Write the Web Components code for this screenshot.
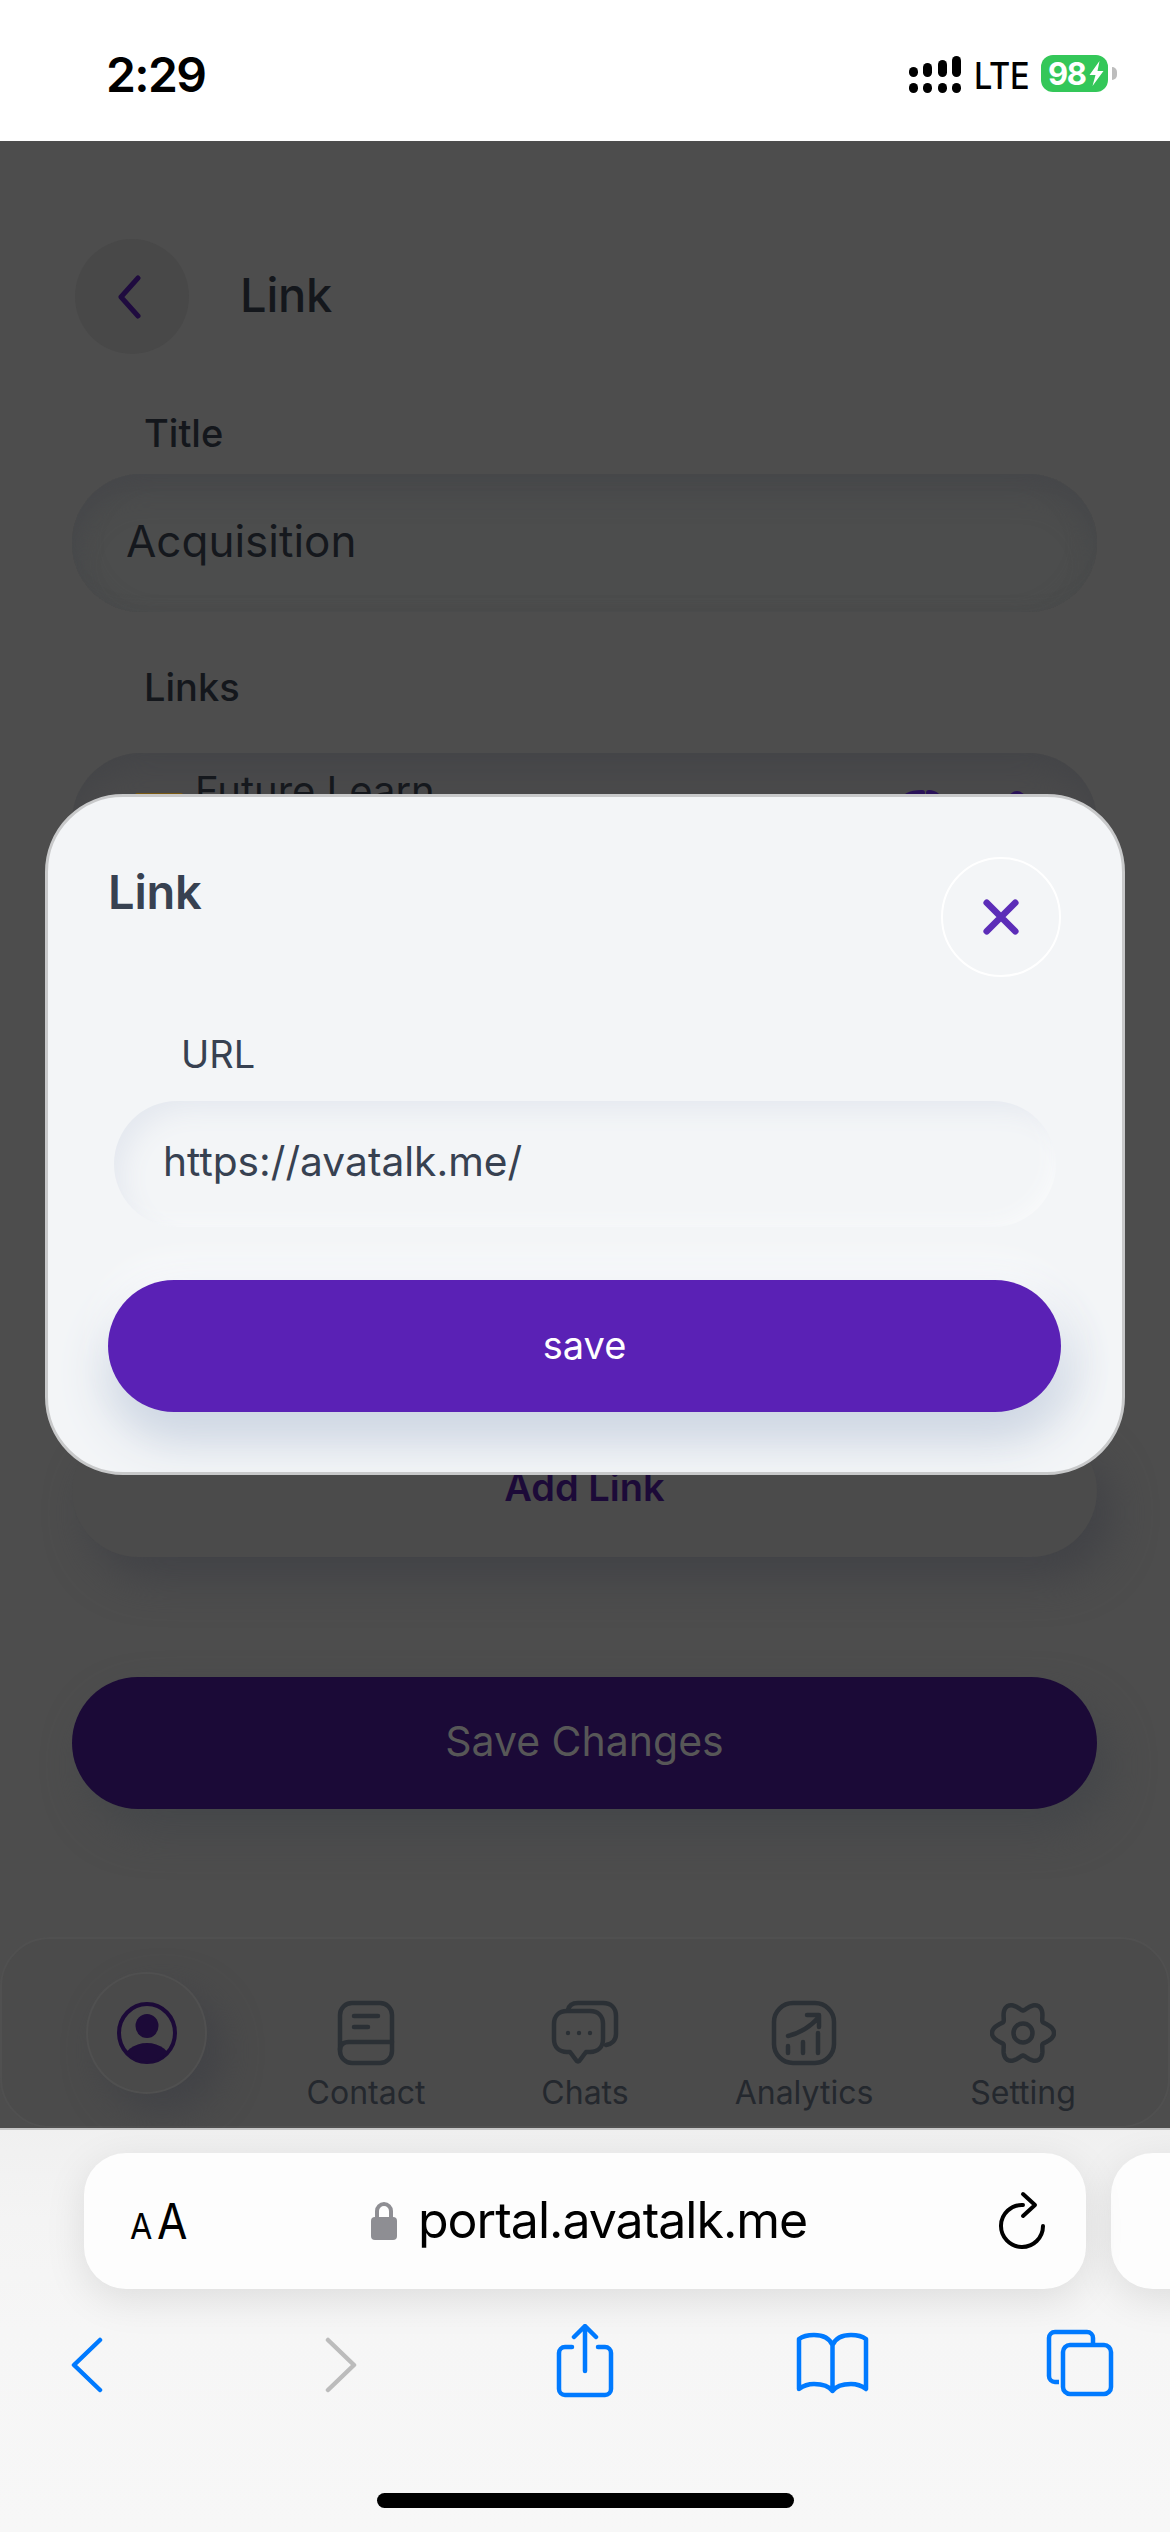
<!DOCTYPE html>
<html lang="en"><head><meta charset="utf-8"><title>Link</title>
<style>
html,body{margin:0;padding:0;background:#4d4d4d}
body{width:1170px;height:2532px;display:flex;flex-direction:column;overflow:hidden;font-family:Inter,"Liberation Sans",sans-serif}
app-screen{flex:1;min-height:0}
</style></head><body>
<status-bar></status-bar>
<app-screen>
  <screen-header title="Link"></screen-header>
  <form-label style="--mt:54px">Title</form-label>
  <text-box value="Acquisition"></text-box>
  <form-label style="--mt:50px">Links</form-label>
  <links-card></links-card>
  <neo-button kind="add" style="--mt:32px">Add Link</neo-button>
  <neo-button kind="primary" style="--mt:120px">Save Changes</neo-button>
  <nav-bar></nav-bar>
  <link-modal></link-modal>
</app-screen>
<browser-bar></browser-bar>
<script>
function def(name,html,init){
  customElements.define(name,class extends HTMLElement{
    connectedCallback(){
      if(this.shadowRoot)return;
      const r=this.attachShadow({mode:'open'});
      r.innerHTML=typeof html==='function'?html(this):html;
      if(init)init(r,this);
    }
  });
}
def('status-bar',`<style>
:host{display:flex;height:141px;flex:none;background:#fff;position:relative;align-items:flex-start;justify-content:space-between;box-sizing:border-box;color:#000}
.t{margin:46px 0 0 106px;font:600 48px/58px Inter,sans-serif;letter-spacing:-1.6px}
.r{display:flex;align-items:flex-start;margin:55px 62px 0 0}
.lte{font:500 37px/37px Inter,sans-serif;margin:2px 15px 0 13px;letter-spacing:-.3px;transform:scaleX(.88);width:52px;transform-origin:left}
.bat{width:67px;height:37px;border-radius:12px;background:#34c759;color:#fff;display:flex;align-items:center;padding-left:7px;box-sizing:border-box;font:700 31px/37px Inter,sans-serif;letter-spacing:-1.4px;position:relative}
.bat svg{margin-left:2px}
.nub{width:5px;height:13px;margin:12px -9px 0 4px;background:#bdbdbd;border-radius:0 6px 6px 0}
</style>
<div class="t">2:29</div>
<div class="r">
<svg width="52" height="38" viewBox="0 0 52 38" fill="#000"><rect x="0" y="12" width="9" height="10" rx="4.5"/><rect x="14" y="8" width="9" height="14" rx="4.5"/><rect x="29" y="5" width="9" height="17" rx="4.5"/><rect x="43" y="1" width="9" height="21" rx="4.5"/><rect x="0" y="28" width="9" height="10" rx="4.5"/><rect x="14" y="28" width="9" height="10" rx="4.5"/><rect x="29" y="28" width="9" height="10" rx="4.5"/><rect x="43" y="28" width="9" height="10" rx="4.5"/></svg>
<div class="lte">LTE</div>
<div class="bat">98<svg width="17" height="25" viewBox="0 0 16 25"><path d="M11 0 1 14h6L4 25 15 10H9z" fill="#fff"/></svg></div>
<div class="nub"></div>
</div>`);
def('app-screen',`<style>
:host{display:flex;flex-direction:column;position:relative;background:#4d4d4d;overflow:hidden;color:#15181d;font-family:Inter,sans-serif}
</style><slot></slot>`);
def('screen-header',h=>`<style>
:host{display:flex;align-items:center;margin:98px 0 0 75px;height:115px;flex:none}
.c{width:114px;height:115px;border-radius:50%;background:#484848;display:flex;align-items:center;justify-content:center}
h1{margin:0 0 4px 51px;font:500 47px/60px Inter,sans-serif;color:#14171c;letter-spacing:-.2px}
</style><div class="c"><svg width="28" height="44" viewBox="0 0 28 44" style="margin-right:7px"><path d="M23 3 6 22l17 19" fill="none" stroke="#1f0b3f" stroke-width="5" stroke-linecap="round" stroke-linejoin="round"/></svg></div><h1>${h.getAttribute('title')}</h1>`);
def('form-label',`<style>
:host{display:block;margin:var(--mt,0) 0 0 144px;font:500 38px/50px Inter,sans-serif;color:#14171c;flex:none}
</style><slot></slot>`);
def('text-box',h=>`<style>
:host{display:flex;align-items:center;flex:none;box-sizing:border-box;height:138px;margin:16px 73px 0 72px;border-radius:69px;padding:0 0 4px 54px;background:#4c4d4d;box-shadow:inset 0 22px 30px -8px #46474a,inset 14px 0 24px -12px #484a4c,inset -14px 0 24px -12px #4a4c4c;color:#15181d;font:400 44px/50px Inter,sans-serif}
</style>${h.getAttribute('value')}`);
def('links-card',`<style>
:host{display:block;flex:none;box-sizing:border-box;height:640px;margin:41px 73px 0 72px;border-radius:69px;background:#4a4a4b;box-shadow:inset 0 22px 30px -8px #444548;overflow:hidden;position:relative}
.row{display:flex;align-items:flex-start;padding:15px 67px 0 63px;color:#15181d;font:400 40px/46px Inter,sans-serif}
.ic{width:48px;height:48px;background:#7a5a12;border-radius:2px;margin:25px 12px 0 0;flex:none}
.name{flex:1}
svg{margin-top:22px;flex:none}
</style><div class="row"><div class="ic"></div><div class="name">Future Learn</div>
<svg width="46" height="36" viewBox="0 0 46 36" fill="none" stroke="#2a1259" stroke-width="6" stroke-linecap="round"><path d="M3 14C6 5 14 3 24 3"/><path d="M31 3C37 3 42 8 44 12"/></svg>
<svg width="26" height="36" viewBox="0 0 26 36" style="margin-left:60px" fill="#2a1259"><circle cx="13" cy="9" r="8"/></svg>
</div>`);
def('neo-button',h=>{
 const add=h.getAttribute('kind')==='add';
 return `<style>
:host{display:flex;align-items:center;justify-content:center;flex:none;box-sizing:border-box;height:132px;margin:var(--mt,0) 73px 0 72px;border-radius:66px;padding-bottom:${add?'8':'4'}px;
 background:${add?'#4b4b4b':'#1b0a37'};color:${add?'#1c0a38':'#575757'};
 box-shadow:${add?'16px 22px 40px #424347':'14px 22px 40px #45474a'};
 font:${add?'600':'400'} ${add?'38':'41'}px/50px Inter,sans-serif;letter-spacing:0}
</style><slot></slot>`});
def('nav-item',h=>`<style>
:host{display:flex;flex-direction:column;align-items:center;width:146px;flex:none;color:#24282e;font:400 32px/36px Inter,sans-serif}
.i{height:64px;display:flex;align-items:center;justify-content:center;margin-bottom:10px}
::slotted(svg){display:block}
</style><div class="i"><slot name="icon"></slot></div><div>${h.getAttribute('label')}</div>`);
def('nav-bar',`<style>
:host{display:flex;position:relative;flex:none;box-sizing:border-box;height:191px;margin-top:128px;border:2px solid #505050;border-radius:50px;background:#4b4b4b;align-items:flex-start}
.me{width:121px;height:122px;border-radius:50%;margin:33px 0 0 84px;flex:none;background:#4a4a4a;border:2px solid #505050;box-sizing:border-box;box-shadow:16px 18px 36px #424347;display:flex;align-items:center;justify-content:center}
.items{display:flex;gap:73px;position:absolute;left:291px;top:62px}
</style>
<div class="me"><svg width="60" height="62" viewBox="0 0 60 62"><defs><clipPath id="cp"><ellipse cx="30" cy="31" rx="28" ry="29"/></clipPath></defs><ellipse cx="30" cy="31" rx="28" ry="29" fill="none" stroke="#1c0a38" stroke-width="4"/><ellipse cx="30" cy="24" rx="11.500" ry="12" fill="#1c0a38"/><ellipse cx="30" cy="60" rx="24" ry="19" fill="#1c0a38" clip-path="url(#cp)"/></svg></div>
<div class="items">
<nav-item label="Contact">
<svg slot="icon" width="58" height="66" viewBox="0 0 58 66" fill="none" stroke="#2b3035" stroke-width="4.500" stroke-linecap="round"><rect x="3" y="3" width="52" height="60" rx="12"/><path d="M3 50c0-6 4-8 9-8h43M17 16h24M17 27h14"/></svg></nav-item>
<nav-item label="Chats">
<svg slot="icon" width="68" height="66" viewBox="0 0 68 66" fill="none" stroke="#2b3035" stroke-width="4.500" stroke-linejoin="round" stroke-linecap="round"><path d="M17 10c1-5 5-7 10-7h25c8 0 13 5 13 13v18c0 6-4 10-10 11"/><path d="M16 11h23c8 0 13 5 13 13v15c0 8-5 13-13 13h-4l-6 8c-1 2-3 2-4 0l-6-8h-3C8 52 3 47 3 39V24c0-8 5-13 13-13z"/><circle cx="17" cy="33" r="2.200" fill="#2b3035" stroke="none"/><circle cx="28" cy="33" r="2.200" fill="#2b3035" stroke="none"/><circle cx="39" cy="33" r="2.200" fill="#2b3035" stroke="none"/></svg></nav-item>
<nav-item label="Analytics">
<svg slot="icon" width="66" height="66" viewBox="0 0 66 66" fill="none" stroke="#2b3035" stroke-width="4.500" stroke-linecap="round" stroke-linejoin="round"><rect x="3" y="3" width="60" height="60" rx="19"/><path d="M17 36c12-3 22-9 30-18M36 15h12v12M17 46v7M32 42v11M47 33v20"/></svg></nav-item>
<nav-item label="Setting">
<svg id="gear" slot="icon" width="66" height="66" viewBox="0 0 66 66" fill="none" stroke="#2b3035" stroke-width="4.500" stroke-linejoin="round"><path d=""/><circle cx="33" cy="33" r="9.500"/></svg></nav-item>
</div>`,r=>{
  let d='';
  for(let i=0;i<=180;i++){
    const a=i/180*Math.PI*2;
    const c=.5+.5*Math.cos(6*a);
    const rad=22.500+8.500*Math.pow(c,.8);
    d+=(i?'L':'M')+(33+rad*Math.cos(a)).toFixed(2)+' '+(33+rad*Math.sin(a)).toFixed(2);
  }
  r.querySelector('#gear path').setAttribute('d',d+'Z');
});
def('link-modal',`<style>
:host{position:absolute;left:45px;top:653px;width:1080px;height:681px;box-sizing:border-box;border:3px solid #c8c9ca;border-radius:78px;background:#f3f5f7;overflow:hidden;display:flex;flex-direction:column;color:#374151;font-family:Inter,sans-serif}
.top{display:flex;justify-content:space-between;align-items:flex-start;padding:60px 61px 0 60px}
h2{margin:5px 0 0;font:600 47px/60px Inter,sans-serif;color:#374151;letter-spacing:-.2px}
.x{width:120px;height:120px;box-sizing:border-box;border-radius:50%;border:2px solid #fff;display:flex;align-items:center;justify-content:center}
.l{margin:52px 0 0 133px;font:400 38px/50px Inter,sans-serif}
.in{margin:22px 66px 0 66px;height:126px;border-radius:63px;box-sizing:border-box;display:flex;align-items:center;padding:0 0 5px 49px;font:400 40.700px/50px Inter,sans-serif;box-shadow:inset 14px 14px 26px -6px #e4e8ef,inset -8px -8px 20px -6px #f9fafb;background:#f3f5f7}
.b{margin:53px 61px 0 60px;height:132px;border-radius:66px;background:#5a21b5;color:#fff;display:flex;align-items:center;justify-content:center;padding-bottom:2px;box-sizing:border-box;font:400 38px/50px Inter,sans-serif;box-shadow:0 26px 50px #ccd5e2,0 -10px 40px #fff,14px 14px 40px #dde3ec}
</style>
<div class="top"><h2>Link</h2><div class="x"><svg width="38" height="38" viewBox="0 0 40 40"><path d="M5 5l30 30M35 5 5 35" stroke="#5c2db8" stroke-width="7" stroke-linecap="round"/></svg></div></div>
<div class="l">URL</div>
<div class="in">https://avatalk.me/</div>
<div class="b">save</div>`);
def('browser-bar',`<style>
:host{display:block;position:relative;flex:none;height:404px;background:linear-gradient(#f0f0f0,#f4f4f4 90px,#f6f6f6 200px,#f7f7f7);border-top:2px solid #c6c6c6;box-sizing:border-box;overflow:hidden;color:#000;font-family:Inter,sans-serif}
.row{display:flex;gap:25px;margin:23px 0 0 84px;width:1200px}
.url{width:1002px;height:136px;flex:none;background:#fdfdfd;border-radius:42px;box-shadow:0 10px 40px rgba(0,0,0,.1);display:flex;align-items:center;box-sizing:border-box;position:relative}
.next{width:200px;height:136px;flex:none;background:#fdfdfd;border-radius:42px;box-shadow:0 10px 40px rgba(0,0,0,.1)}
.aa{margin-left:46px;display:flex;align-items:baseline;width:105px;flex:none;font-weight:400}
.aa span{display:inline-block;transform:scaleX(.9);transform-origin:left}
.aa span:first-child{font-size:36px;width:27px}.aa span:last-child{font-size:49px}
.mid{display:flex;align-items:center;margin-left:135px}
.u{font:400 50px/60px Inter,sans-serif;margin-left:20px;letter-spacing:-1px;margin-top:-2px}
.r{position:absolute;right:40px;top:36px}
.tools{display:flex;align-items:flex-start;position:relative;height:90px;margin-top:35px}
.tools svg{flex:none}
.home{position:absolute;left:377px;top:363px;width:417px;height:15px;border-radius:8px;background:#000}
</style>
<div class="row"><div class="url">
<div class="aa"><span>A</span><span>A</span></div>
<div class="mid"><svg width="28" height="40" viewBox="0 0 28 40"><path d="M7 17V10a7 7 0 0 1 14 0v7" fill="none" stroke="#8e8e93" stroke-width="4"/><rect x="1" y="16" width="26" height="23" rx="4" fill="#8e8e93"/></svg><span class="u">portal.avatalk.me</span></div>
<svg class="r" width="50" height="60" viewBox="0 0 50 60" fill="none" stroke="#000" stroke-width="4" stroke-linecap="round" stroke-linejoin="round"><path d="M27 16A21 21 0 1 0 47 37"/><path d="M27 5l12 11-12 11"/></svg>
</div><div class="next"></div></div>
<div class="tools">
<svg style="margin-left:70px;margin-top:13px" width="34" height="58" viewBox="0 0 34 58" fill="none" stroke="#007aff" stroke-width="4.500" stroke-linecap="round" stroke-linejoin="round"><path d="M30 3 4 28l26 25"/></svg>
<svg style="margin-left:220px;margin-top:13px" width="34" height="58" viewBox="0 0 34 58" fill="none" stroke="#bcbcbc" stroke-width="4.500" stroke-linecap="round" stroke-linejoin="round"><path d="M4 3l26 25L4 53"/></svg>
<svg style="margin-left:197px;margin-top:0" width="60" height="74" viewBox="0 0 60 74" fill="none" stroke="#007aff" stroke-width="4.500" stroke-linecap="round" stroke-linejoin="round"><path d="M17 23H10a6 6 0 0 0-6 6v36a6 6 0 0 0 6 6h40a6 6 0 0 0 6-6V29a6 6 0 0 0-6-6h-7M30 47V3M19 13 30 2l11 11"/></svg>
<svg style="margin-left:180px;margin-top:8px" width="75" height="62" viewBox="0 0 75 62" fill="none" stroke="#007aff" stroke-width="4.500" stroke-linejoin="round" stroke-linecap="round"><path d="M37.500 13C34 5 26 3 19 3c-6 0-11 1-15 4v50c4-3 9-5 15-5 8 0 15 2 18.500 7 3.500-5 10.500-7 18.500-7 6 0 11 2 15 5V7c-4-3-9-4-15-4-7 0-15 2-18.500 10zM37.500 13v46"/></svg>
<svg style="margin-left:176px;margin-top:5px" width="68" height="68" viewBox="0 0 68 68" fill="none" stroke="#007aff" stroke-width="4.500" stroke-linejoin="round"><path d="M13 53H9a6 6 0 0 1-6-6V9a6 6 0 0 1 6-6h32a6 6 0 0 1 6 6v6"/><rect x="17" y="16" width="48" height="49" rx="7"/></svg>
</div>
<div class="home"></div>`);
</script>
</body></html>
